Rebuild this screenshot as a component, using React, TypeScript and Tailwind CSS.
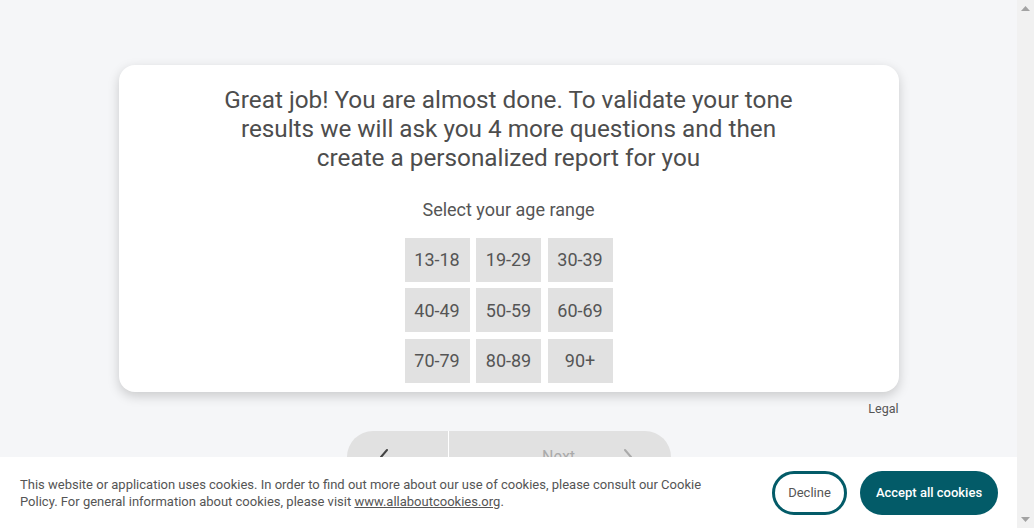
import React from 'react';

/* ─── Data ─── */

const AGES = ['13-18', '19-29', '30-39', '40-49', '50-59', '60-69', '70-79', '80-89', '90+'];

const FONT = 'font-["Roboto","Liberation_Sans",sans-serif]';

/* ─── Pieces ─── */

function Chevron({ dir, color }: { dir: 'left' | 'right'; color: string }) {
  return (
    <svg width="10" height="16" viewBox="0 0 10 16" fill="none">
      <path
        d={dir === 'left' ? 'M8 1 L2 8 L8 15' : 'M2 1 L8 8 L2 15'}
        stroke={color}
        strokeWidth="2"
        strokeLinecap="round"
        strokeLinejoin="round"
      />
    </svg>
  );
}

function Scrollbar() {
  return (
    <div className="w-[17px] h-[528px] bg-[#f1f1f1] flex flex-col items-center justify-between py-[6px]">
      <svg width="9" height="5" viewBox="0 0 9 5">
        <path d="M0 5 L4.5 0 L9 5 Z" fill="#a3a3a3" />
      </svg>
      <svg width="9" height="5" viewBox="0 0 9 5">
        <path d="M0 0 L4.5 5 L9 0 Z" fill="#a3a3a3" />
      </svg>
    </div>
  );
}

function CookieBanner() {
  return (
    <div className="absolute left-0 right-0 bottom-0 h-[71px] bg-white flex items-center justify-between pl-[20px] pr-[19px]">
      <p className="w-[700px] text-[13px] leading-[16.5px] text-[#555] pt-[2px]">
        This website or application uses cookies. In order to find out more about our use of cookies, please consult our Cookie
        Policy. For general information about cookies, please visit{' '}
        <span className="underline">www.allaboutcookies.org</span>.
      </p>
      <div className="flex items-center gap-[13px]">
        <button className="w-[75px] h-[44px] rounded-full border-[3px] border-[#035b68] bg-white text-[13px] text-[#555]">
          Decline
        </button>
        <button className="w-[138px] h-[44px] rounded-full bg-[#035b68] text-[13px] font-medium text-white">
          Accept all cookies
        </button>
      </div>
    </div>
  );
}

/* ─── Main ─── */

export default function App() {
  return (
    <div className={`${FONT} flex w-[1034px] h-[528px] overflow-hidden bg-[#f5f6f8]`}>
      <div className="relative w-[1017px] h-[528px] overflow-hidden">
        <div className="flex flex-col items-center pt-[65px]">
          {/* Card */}
          <div className="w-[780px] bg-white rounded-[16px] shadow-[0_4px_12px_rgba(0,0,0,0.18)] flex flex-col items-center pt-[20px] pb-[9px]">
            <h1 className="w-[600px] text-center text-[24.3px] leading-[29px] text-[#4d4d4d] font-normal">
              Great job! You are almost done. To validate your tone results we will ask you 4 more questions and then
              create a personalized report for you
            </h1>
            <p className="mt-[26px] text-[18px] leading-[24px] text-[#555]">Select your age range</p>
            <div className="mt-[15.5px] grid grid-cols-[65px_65px_65px] gap-x-[6.5px] gap-y-[6.5px]">
              {AGES.map((a) => (
                <button
                  key={a}
                  className="h-[44px] bg-[#e1e1e1] text-[18px] text-[#555] flex items-center justify-center"
                >
                  {a}
                </button>
              ))}
            </div>
          </div>

          {/* Legal */}
          <div className="w-[780px] flex justify-end mt-[8px]">
            <span className="text-[12.5px] leading-[17px] text-[#555]">Legal</span>
          </div>

          {/* Nav */}
          <div className="mt-[14px] flex h-[52px] w-[324px] rounded-[30px] overflow-hidden">
            <div className="w-[101px] bg-[#e1e1e1] flex items-center justify-start pl-[32px]">
              <Chevron dir="left" color="#444" />
            </div>
            <div className="w-[1.5px] bg-white" />
            <div className="flex-1 bg-[#e1e1e1] flex items-center pl-[93px] gap-[48px]">
              <span className="text-[16px] text-[#aaa]">Next</span>
              <Chevron dir="right" color="#aaa" />
            </div>
          </div>
        </div>

        <CookieBanner />
      </div>
      <Scrollbar />
    </div>
  );
}
